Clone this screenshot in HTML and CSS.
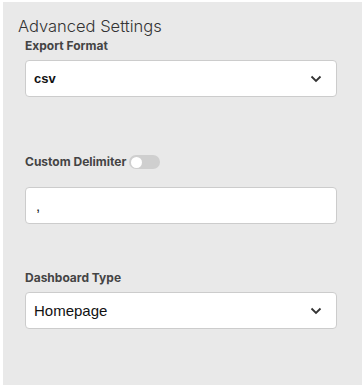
FILE: index.html
```html
<!DOCTYPE html>
<html lang="en">
<head>
    <meta charset="UTF-8">
    <title>Advanced Settings</title>
    <link rel="stylesheet" href="styles.css">
</head>
<body>

    <div class="panel">
        <h2 class="panel-title">Advanced Settings</h2>

        <div class="field">
            <label class="field-label">Export Format</label>
            <div class="select select-bold">
                <span>csv</span>
                <svg class="chevron" width="12" height="8" viewBox="0 0 12 8"><path d="M1.5 1.5 L6 6 L10.5 1.5" fill="none" stroke="#333" stroke-width="1.8"/></svg>
            </div>
        </div>

        <div class="field field-delimiter">
            <label class="field-label">
                Custom Delimiter
                <span class="toggle"><span class="knob"></span></span>
            </label>
            <div class="input">,</div>
        </div>

        <div class="field">
            <label class="field-label">Dashboard Type</label>
            <div class="select">
                <span>Homepage</span>
                <svg class="chevron" width="12" height="8" viewBox="0 0 12 8"><path d="M1.5 1.5 L6 6 L10.5 1.5" fill="none" stroke="#333" stroke-width="1.8"/></svg>
            </div>
        </div>
    </div>

</body>
</html>
```

FILE: styles.css
```css
body {
    margin: 0;
    background-color: #fff;
    font-family: 'Inter', 'Liberation Sans', sans-serif;
}

.panel {
    margin: 2px 0 0 3px;
    width: 359px;
    height: 383px;
    box-sizing: border-box;
    background-color: #e9e9e9;
    padding: 14px 0 0 15px;
}

.panel-title {
    margin: 0;
    font-size: 16.5px;
    font-weight: 300;
    line-height: 20px;
    color: #333;
}

.field {
    margin-left: 7px;
    width: 312px;
}

.field-label {
    display: flex;
    align-items: center;
    gap: 3px;
    font-size: 12px;
    font-weight: 700;
    line-height: 16px;
    color: #444;
    margin: 2px 0 6px;
}

.select, .input {
    box-sizing: border-box;
    height: 37px;
    background-color: #fff;
    border: 1px solid #ccc;
    border-radius: 4px;
    display: flex;
    align-items: center;
    justify-content: space-between;
    padding: 0 14px 0 8px;
    font-family: 'Liberation Sans', Arial, sans-serif;
    font-size: 15px;
    color: #111;
}

.select-bold {
    font-size: 13px;
    font-weight: 700;
}

.field + .field {
    margin-top: 57px;
}

.field-delimiter .field-label {
    margin-bottom: 17px;
}

.field-delimiter + .field {
    margin-top: 46px;
}

.input {
    padding-left: 10px;
}

.toggle {
    display: inline-block;
    position: relative;
    width: 31px;
    height: 14px;
    border-radius: 7px;
    background-color: #cfcfcf;
}

    .toggle .knob {
        position: absolute;
        left: 2px;
        top: 1.5px;
        width: 11px;
        height: 11px;
        border-radius: 50%;
        background-color: #fff;
    }
```
